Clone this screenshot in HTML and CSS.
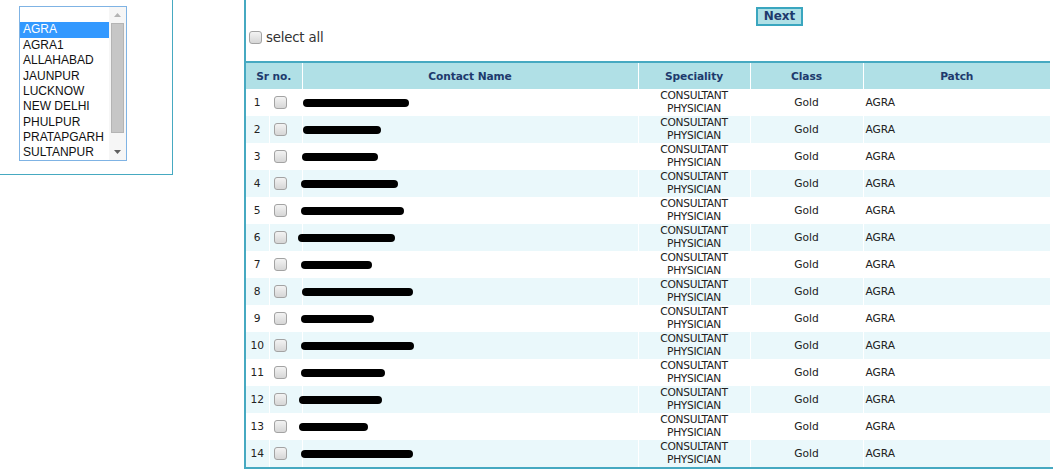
FILE: index.html
```html
<!DOCTYPE html>
<html lang="en">
<head>
<meta charset="utf-8">
<title>Contact selection</title>
<link rel="stylesheet" href="styles.css">
</head>
<body>
<div class="page">
  <div class="filter-panel">
    <div class="listbox" role="listbox" aria-label="Patch">
      <ul class="options">
        <li class="opt blank">&nbsp;</li>
        <li class="opt selected">AGRA</li>
        <li class="opt">AGRA1</li>
        <li class="opt">ALLAHABAD</li>
        <li class="opt">JAUNPUR</li>
        <li class="opt">LUCKNOW</li>
        <li class="opt">NEW DELHI</li>
        <li class="opt">PHULPUR</li>
        <li class="opt">PRATAPGARH</li>
        <li class="opt">SULTANPUR</li>
      </ul>
      <div class="scrollbar">
        <span class="arrow up"><svg width="7" height="4" viewBox="0 0 7 4"><path d="M0 4 L3.5 0 L7 4 Z" fill="#b4b4b4"/></svg></span>
        <span class="thumb"></span>
        <span class="arrow down"><svg width="7" height="4" viewBox="0 0 7 4"><path d="M0 0 L3.5 4 L7 0 Z" fill="#606060"/></svg></span>
      </div>
    </div>
  </div>

  <div class="results-panel">
    <div class="toolbar">
      <button class="btn-next" type="button">Next</button>
    </div>
    <label class="select-all"><input class="chk" type="checkbox"> select all</label>

    <table class="grid">
      <colgroup>
        <col class="c-num"><col class="c-chk"><col class="c-name"><col class="c-spec"><col class="c-class"><col class="c-patch">
      </colgroup>
      <thead>
        <tr><th colspan="2">Sr no.</th><th>Contact Name</th><th>Speciality</th><th>Class</th><th>Patch</th></tr>
      </thead>
      <tbody>
        <tr><td class="num">1</td><td class="cb"><input class="chk" type="checkbox"></td><td class="name"><span class="redact" style="--x:0px;--w:106px"></span></td><td class="spec">CONSULTANT<br>PHYSICIAN</td><td class="cls">Gold</td><td class="patch">AGRA</td></tr>
        <tr><td class="num">2</td><td class="cb"><input class="chk" type="checkbox"></td><td class="name"><span class="redact" style="--x:0px;--w:78px"></span></td><td class="spec">CONSULTANT<br>PHYSICIAN</td><td class="cls">Gold</td><td class="patch">AGRA</td></tr>
        <tr><td class="num">3</td><td class="cb"><input class="chk" type="checkbox"></td><td class="name"><span class="redact" style="--x:-1px;--w:76px"></span></td><td class="spec">CONSULTANT<br>PHYSICIAN</td><td class="cls">Gold</td><td class="patch">AGRA</td></tr>
        <tr><td class="num">4</td><td class="cb"><input class="chk" type="checkbox"></td><td class="name"><span class="redact" style="--x:-2px;--w:97px"></span></td><td class="spec">CONSULTANT<br>PHYSICIAN</td><td class="cls">Gold</td><td class="patch">AGRA</td></tr>
        <tr><td class="num">5</td><td class="cb"><input class="chk" type="checkbox"></td><td class="name"><span class="redact" style="--x:-2px;--w:103px"></span></td><td class="spec">CONSULTANT<br>PHYSICIAN</td><td class="cls">Gold</td><td class="patch">AGRA</td></tr>
        <tr><td class="num">6</td><td class="cb"><input class="chk" type="checkbox"></td><td class="name"><span class="redact" style="--x:-5px;--w:97px"></span></td><td class="spec">CONSULTANT<br>PHYSICIAN</td><td class="cls">Gold</td><td class="patch">AGRA</td></tr>
        <tr><td class="num">7</td><td class="cb"><input class="chk" type="checkbox"></td><td class="name"><span class="redact" style="--x:-2px;--w:71px"></span></td><td class="spec">CONSULTANT<br>PHYSICIAN</td><td class="cls">Gold</td><td class="patch">AGRA</td></tr>
        <tr><td class="num">8</td><td class="cb"><input class="chk" type="checkbox"></td><td class="name"><span class="redact" style="--x:-1px;--w:111px"></span></td><td class="spec">CONSULTANT<br>PHYSICIAN</td><td class="cls">Gold</td><td class="patch">AGRA</td></tr>
        <tr><td class="num">9</td><td class="cb"><input class="chk" type="checkbox"></td><td class="name"><span class="redact" style="--x:-2px;--w:73px"></span></td><td class="spec">CONSULTANT<br>PHYSICIAN</td><td class="cls">Gold</td><td class="patch">AGRA</td></tr>
        <tr><td class="num">10</td><td class="cb"><input class="chk" type="checkbox"></td><td class="name"><span class="redact" style="--x:-2px;--w:113px"></span></td><td class="spec">CONSULTANT<br>PHYSICIAN</td><td class="cls">Gold</td><td class="patch">AGRA</td></tr>
        <tr><td class="num">11</td><td class="cb"><input class="chk" type="checkbox"></td><td class="name"><span class="redact" style="--x:-2px;--w:84px"></span></td><td class="spec">CONSULTANT<br>PHYSICIAN</td><td class="cls">Gold</td><td class="patch">AGRA</td></tr>
        <tr><td class="num">12</td><td class="cb"><input class="chk" type="checkbox"></td><td class="name"><span class="redact" style="--x:-4px;--w:83px"></span></td><td class="spec">CONSULTANT<br>PHYSICIAN</td><td class="cls">Gold</td><td class="patch">AGRA</td></tr>
        <tr><td class="num">13</td><td class="cb"><input class="chk" type="checkbox"></td><td class="name"><span class="redact" style="--x:-4px;--w:69px"></span></td><td class="spec">CONSULTANT<br>PHYSICIAN</td><td class="cls">Gold</td><td class="patch">AGRA</td></tr>
        <tr><td class="num">14</td><td class="cb"><input class="chk" type="checkbox"></td><td class="name"><span class="redact" style="--x:-2px;--w:112px"></span></td><td class="spec">CONSULTANT<br>PHYSICIAN</td><td class="cls">Gold</td><td class="patch">AGRA</td></tr>
      </tbody>
    </table>
  </div>
</div>
</body>
</html>
```

FILE: styles.css
```css
html, body {
  margin: 0;
  padding: 0;
  background: #fff;
}

body {
  font-family: "DejaVu Sans", Verdana, sans-serif;
  color: #222;
  overflow: hidden;
}

.page {
  display: flex;
  align-items: flex-start;
}

/* ---------- left filter panel ---------- */
.filter-panel {
  flex: 0 0 auto;
  width: 173px;
  height: 175px;
  border-right: 1px solid #46a9c1;
  border-bottom: 1px solid #46a9c1;
  padding: 6px 0 0 19px;
  box-sizing: border-box;
}

.listbox {
  display: flex;
  width: 108px;
  height: 155px;
  box-sizing: border-box;
  border: 1px solid #7fb3e4;
  background: #fff;
  overflow: hidden;
}

.options {
  list-style: none;
  margin: 0;
  padding: 0;
  flex: 1 1 auto;
  font-family: "Liberation Sans", Arial, sans-serif;
  font-size: 12px;
  color: #111;
}

.opt {
  height: 15.375px;
  line-height: 15.375px;
  padding-left: 3px;
  white-space: nowrap;
}

.opt.selected {
  background: #3399ff;
  color: #fff;
}

.scrollbar {
  flex: 0 0 17px;
  display: flex;
  flex-direction: column;
  align-items: center;
  background: #f6f6f6;
}

.arrow {
  flex: 0 0 16px;
  width: 17px;
  display: flex;
  align-items: center;
  justify-content: center;
}

.arrow.down {
  margin-top: auto;
}

.arrow svg {
  display: block;
}

.thumb {
  width: 13px;
  height: 110px;
  box-sizing: border-box;
  border: 1px solid #b4b4b4;
  background: #c6c6c6;
}

/* ---------- right results panel ---------- */
.results-panel {
  flex: 0 0 auto;
  width: 820px;
  margin-left: 71px;
  border-left: 2px solid #46a9c1;
  border-bottom: 2px solid #46a9c1;
}

.toolbar {
  height: 28px;
  padding: 7px 0 0 510px;
  box-sizing: border-box;
}

.btn-next {
  display: block;
  width: 47px;
  height: 19px;
  padding: 0;
  margin: 0;
  border: 2px solid #3aa6bf;
  background: #b0e0e6;
  color: #1e3a6d;
  font-family: "DejaVu Sans", Verdana, sans-serif;
  font-weight: bold;
  font-size: 12px;
  line-height: 15px;
  cursor: pointer;
}

.select-all {
  display: flex;
  align-items: center;
  height: 18px;
  padding-left: 3px;
  font-size: 13.33px;
  color: #333;
  letter-spacing: -0.2px;
}

.select-all .chk {
  margin: 0 4px 0 0;
}

.chk {
  appearance: none;
  -webkit-appearance: none;
  width: 13px;
  height: 13px;
  box-sizing: border-box;
  border: 1px solid #a3a3a3;
  border-radius: 3px;
  background: linear-gradient(#f3f3f3, #d6d6d6);
  margin: 0;
  flex: 0 0 auto;
  vertical-align: middle;
}

/* ---------- table ---------- */
.grid {
  margin-top: 15px;
  width: 804px;
  border-collapse: collapse;
  table-layout: fixed;
  border-top: 2px solid #46a9c1;
  font-size: 10.67px;
}

.c-num { width: 23px; }
.c-chk { width: 33px; }
.c-name { width: 336px; }
.c-spec { width: 112px; }
.c-class { width: 113px; }
.c-patch { width: 187px; }

.grid th {
  height: 26px;
  padding: 0;
  background: #b0e0e6;
  color: #1e3a6d;
  font-weight: bold;
  text-align: center;
  border-left: 1px solid #fff;
  letter-spacing: -0.1px;
}

.grid th:first-child {
  border-left: 0;
}

.grid td {
  height: 27px;
  padding: 0;
  vertical-align: middle;
  border-left: 1px solid #fff;
  color: #222;
}

.grid td:first-child {
  border-left: 0;
}

.grid tbody tr:nth-child(even) td {
  background: #eaf8fb;
}

.num {
  text-align: center;
  padding-left: 1px;
}

.cb {
  padding-left: 4px !important;
  line-height: 0;
}

.redact {
  position: relative;
  z-index: 1;
  display: block;
  width: var(--w);
  margin-left: var(--x);
  height: 8px;
  border-radius: 4px;
  background: #000;
}

.spec {
  text-align: center;
  line-height: 12.5px;
  letter-spacing: -0.3px;
}

.cls {
  text-align: center;
}

.patch {
  padding-left: 2px !important;
}
```
